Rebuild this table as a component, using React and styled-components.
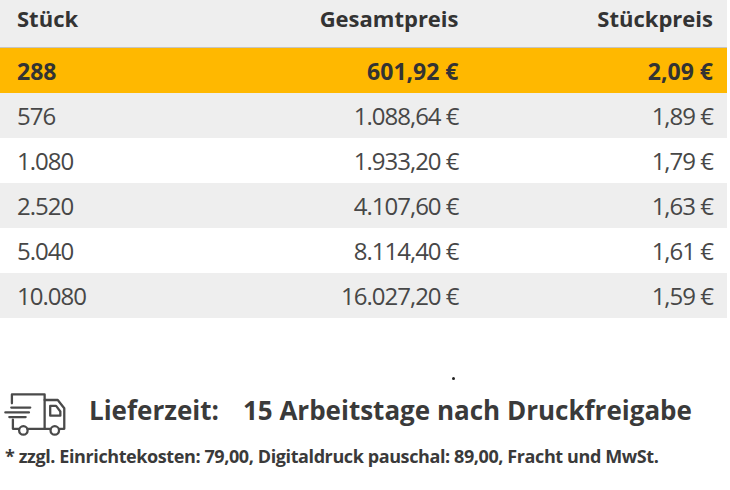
import React from "react";
import styled, { createGlobalStyle } from "styled-components";

const Global = createGlobalStyle`
  body {
    margin: 0;
    background: #fff;
    font-family: "Open Sans", "Noto Sans", sans-serif;
    color: #3a3a3a;
  }
`;

const rows = [
  { qty: "288", total: "601,92 €", unit: "2,09 €", active: true },
  { qty: "576", total: "1.088,64 €", unit: "1,89 €" },
  { qty: "1.080", total: "1.933,20 €", unit: "1,79 €" },
  { qty: "2.520", total: "4.107,60 €", unit: "1,63 €" },
  { qty: "5.040", total: "8.114,40 €", unit: "1,61 €" },
  { qty: "10.080", total: "16.027,20 €", unit: "1,59 €" },
];

const narrow = "96%";

const Page = styled.div`
  width: 730px;
  height: 490px;
  overflow: hidden;
`;

const Table = styled.div`
  width: 727px;
`;

const Row = styled.div`
  display: grid;
  grid-template-columns: 32% 33% 35%;
  align-items: center;
  height: 45px;
  background: ${({ $bg }) => $bg};
  font-stretch: ${narrow};
  font-size: ${({ $active }) => ($active ? "23px" : "24px")};
  font-weight: ${({ $active }) => ($active ? 700 : 400)};
  letter-spacing: ${({ $active }) => ($active ? "0" : "-1px")};
  color: ${({ $active }) => ($active ? "#333" : "#474747")};
`;

const HeadRow = styled(Row)`
  height: 48px;
  align-items: start;
  padding-top: 3px;
  box-sizing: border-box;
  border-bottom: 1px solid #c4c4c4;
  font-size: 22px;
  font-weight: 700;
  letter-spacing: 0;
  color: #333;
`;

const Cell = styled.div`
  padding: 0 14px 0 17px;
  text-align: ${({ $right }) => ($right ? "right" : "left")};
  white-space: nowrap;
  line-height: 30px;
`;

const Delivery = styled.div`
  position: relative;
  margin-top: 69px;
  display: flex;
  align-items: center;
  height: 46px;
  padding-left: 2px;
`;

const Dot = styled.span`
  position: absolute;
  left: 452px;
  top: -10px;
  width: 3px;
  height: 3px;
  border-radius: 50%;
  background: #222;
`;

const Label = styled.span`
  margin-left: 23px;
  font-size: 26px;
  font-weight: 700;
  font-stretch: ${narrow};
  color: #3a3a3a;
  white-space: nowrap;
`;

const Value = styled(Label)`
  margin-left: 24px;
`;

const Note = styled.div`
  margin-top: 11px;
  padding-left: 5px;
  font-size: 18px;
  font-weight: 700;
  font-stretch: ${narrow};
  letter-spacing: -0.4px;
  color: #3a3a3a;
  white-space: nowrap;
`;

function TruckIcon() {
  return (
    <svg width="64" height="54" viewBox="0 0 195 165" fill="none" stroke="#4a4a4a" strokeWidth="7" strokeLinecap="round" strokeLinejoin="round">
      <path d="M30 62V35H130V140" />
      <path d="M130 52H170L190 77V140H175" />
      <path d="M147 70H165L178 87V100H147Z" />
      <path d="M77 140H148" />
      <path d="M33 112V140H52" />
      <path d="M28 75H86" />
      <path d="M10 90H82" />
      <path d="M22 104H72" />
      <circle cx="65" cy="145" r="13" />
      <circle cx="161" cy="145" r="13" />
    </svg>
  );
}

export default function App() {
  return (
    <Page>
      <Global />
      <Table>
        <HeadRow $bg="#eeeeee">
          <Cell>Stück</Cell>
          <Cell $right>Gesamtpreis</Cell>
          <Cell $right>Stückpreis</Cell>
        </HeadRow>
        {rows.map((r, i) => (
          <Row
            key={r.qty}
            $active={r.active}
            $bg={r.active ? "#ffb800" : i % 2 === 1 ? "#eeeeee" : "#ffffff"}
          >
            <Cell>{r.qty}</Cell>
            <Cell $right>{r.total}</Cell>
            <Cell $right>{r.unit}</Cell>
          </Row>
        ))}
      </Table>
      <Delivery>
        <Dot />
        <TruckIcon />
        <Label>Lieferzeit:</Label>
        <Value>15 Arbeitstage nach Druckfreigabe</Value>
      </Delivery>
      <Note>* zzgl. Einrichtekosten: 79,00, Digitaldruck pauschal: 89,00, Fracht und MwSt.</Note>
    </Page>
  );
}
